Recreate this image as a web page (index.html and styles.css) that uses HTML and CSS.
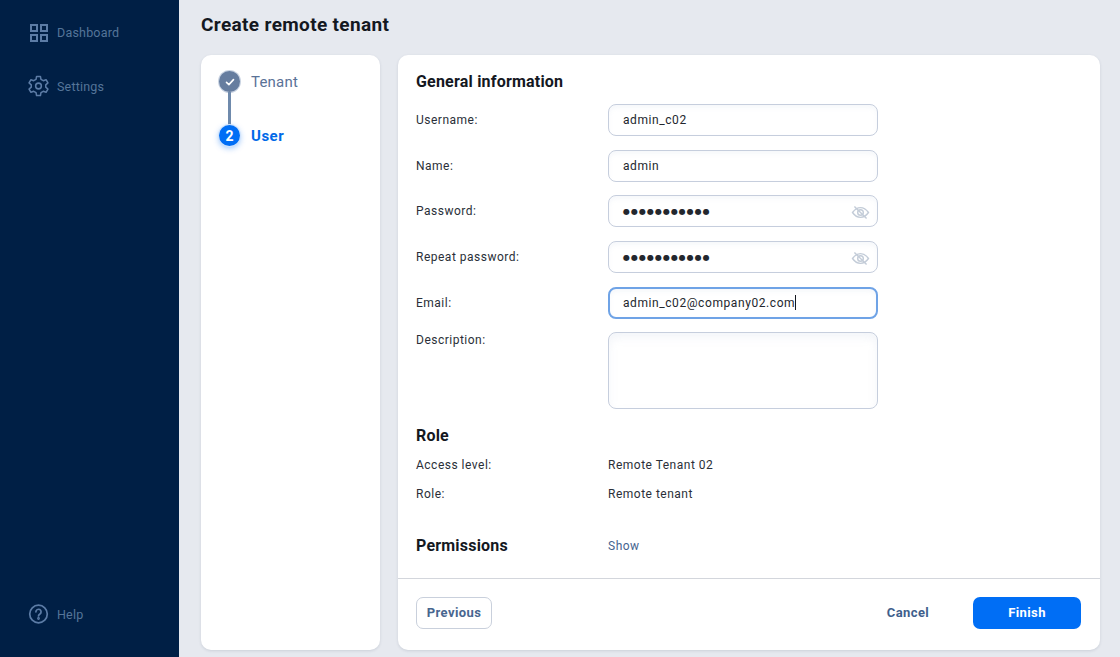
FILE: index.html
```html
<!DOCTYPE html>
<html lang="en">
<head>
    <meta charset="UTF-8">
    <title>Create remote tenant</title>
    <link rel="stylesheet" href="styles.css">
</head>
<body>
    <aside class="sidebar">
        <nav class="nav">
            <a class="nav-item">
                <svg class="nav-icon" viewBox="0 0 21 22" fill="none" stroke="currentColor" stroke-width="2">
                    <rect x="3" y="4" width="6" height="6"/>
                    <rect x="13" y="4" width="6" height="6"/>
                    <rect x="3" y="14" width="6" height="6"/>
                    <rect x="13" y="14" width="6" height="6"/>
                </svg>
                Dashboard
            </a>
            <a class="nav-item">
                <svg class="nav-icon" viewBox="1 1 22 22" fill="none" stroke="currentColor" stroke-width="1.6" stroke-linejoin="round">
                    <circle cx="12" cy="12" r="3"/>
                    <path d="M10 2h4l.6 3 2.4 1.4 2.9-1 2 3.4-2.3 2v2.4l2.3 2-2 3.4-2.9-1-2.4 1.4-.6 3h-4l-.6-3L7 17.6l-2.9 1-2-3.4 2.3-2v-2.4l-2.3-2 2-3.4 2.9 1L9.400 5z"/>
                </svg>
                Settings
            </a>
        </nav>
        <a class="nav-item">
            <svg class="nav-icon" viewBox="0 0 22 22" fill="none" stroke="currentColor" stroke-width="1.8" stroke-linecap="round">
                <circle cx="11" cy="11" r="9.200"/>
                <path d="M8.300 8.700a2.700 2.700 0 1 1 4.200 2.300c-.9.600-1.500 1.100-1.500 2"/>
                <circle cx="11" cy="15.700" r=".6"/>
            </svg>
            Help
        </a>
    </aside>

    <main class="content">
        <h1 class="page-title">Create remote tenant</h1>
        <div class="panels">
            <div class="card steps">
                <div class="step done">
                    <span class="step-dot">
                        <svg viewBox="0 0 12 12" width="12" height="12" fill="none" stroke="#fff" stroke-width="1.600" stroke-linecap="round" stroke-linejoin="round">
                            <path d="M2.500 6.300l2.400 2.300 4.600-5"/>
                        </svg>
                    </span>
                    Tenant
                </div>
                <div class="step active">
                    <span class="step-dot">2</span>
                    User
                </div>
            </div>

            <div class="card wizard">
                <div class="wizard-body">
                    <h2 class="section-title">General information</h2>
                    <div class="form">
                        <div class="row">
                            <label class="row-label">Username:</label>
                            <div class="field">admin_c02</div>
                        </div>
                        <div class="row">
                            <label class="row-label">Name:</label>
                            <div class="field">admin</div>
                        </div>
                        <div class="row">
                            <label class="row-label">Password:</label>
                            <div class="field secret">
                                <span class="dots">●●●●●●●●●●●</span>
                                <svg class="eye" viewBox="0 0 20 16" fill="none" stroke="currentColor" stroke-width="1.500">
                                    <path d="M1.500 8C4 4.500 6.800 2.800 10 2.800s6 1.700 8.500 5.200c-2.500 3.500-5.300 5.200-8.500 5.200S4 11.500 1.500 8z"/>
                                    <circle cx="10" cy="8" r="3"/>
                                    <path d="M3.500 1.500l13 13"/>
                                </svg>
                            </div>
                        </div>
                        <div class="row">
                            <label class="row-label">Repeat password:</label>
                            <div class="field secret">
                                <span class="dots">●●●●●●●●●●●</span>
                                <svg class="eye" viewBox="0 0 20 16" fill="none" stroke="currentColor" stroke-width="1.500">
                                    <path d="M1.500 8C4 4.500 6.800 2.800 10 2.800s6 1.700 8.500 5.200c-2.500 3.500-5.300 5.200-8.500 5.200S4 11.500 1.500 8z"/>
                                    <circle cx="10" cy="8" r="3"/>
                                    <path d="M3.500 1.500l13 13"/>
                                </svg>
                            </div>
                        </div>
                        <div class="row">
                            <label class="row-label">Email:</label>
                            <div class="field focused">admin_c02@company02.com<span class="caret"></span></div>
                        </div>
                        <div class="row row-top">
                            <label class="row-label">Description:</label>
                            <div class="field area"></div>
                        </div>
                    </div>

                    <h2 class="section-title role-title">Role</h2>
                    <div class="info">
                        <div class="info-row"><span class="row-label">Access level:</span><span>Remote Tenant 02</span></div>
                        <div class="info-row"><span class="row-label">Role:</span><span>Remote tenant</span></div>
                    </div>

                    <div class="permissions">
                        <h2 class="section-title row-label">Permissions</h2>
                        <a class="link">Show</a>
                    </div>
                </div>

                <div class="wizard-footer">
                    <button class="btn btn-outline">Previous</button>
                    <div class="footer-right">
                        <button class="btn btn-plain">Cancel</button>
                        <button class="btn btn-primary">Finish</button>
                    </div>
                </div>
            </div>
        </div>
    </main>
</body>
</html>
```

FILE: styles.css
```css
* {
    box-sizing: border-box;
}
html, body {
    height: 100%;
}
body {
    margin: 0;
    display: flex;
    height: 657px;
    overflow: hidden;
    font-family: Roboto, "Liberation Sans", Arial, sans-serif;
    font-size: 12px;
    letter-spacing: 0.5px;
    color: #2a2f38;
    background-color: #e6e9ef;
}

/* sidebar */
.sidebar {
    width: 179px;
    flex: none;
    display: flex;
    flex-direction: column;
    justify-content: space-between;
    padding: 21px 0 32px 28px;
    background-color: #001f45;
}
.nav {
    display: flex;
    flex-direction: column;
    gap: 32px;
}
.nav-item {
    display: flex;
    align-items: center;
    gap: 8px;
    height: 22px;
    font-size: 12.5px;
    letter-spacing: 0.2px;
    color: #557599;
}
.nav-icon {
    width: 21px;
    height: 22px;
    flex: none;
    color: #5c7ca6;
}

/* content */
.content {
    flex: 1;
    padding: 0 20px 7px 22px;
    display: flex;
    flex-direction: column;
}
.page-title {
    margin: 0;
    height: 55px;
    padding-top: 14px;
    font-size: 19px;
    line-height: 22px;
    font-weight: 700;
    letter-spacing: 0.35px;
    color: #14181f;
}
.panels {
    flex: 1;
    display: flex;
    gap: 18px;
    min-height: 0;
}
.card {
    background: #fff;
    border-radius: 10px;
    box-shadow: 0 1px 3px rgba(40, 55, 85, 0.14);
}

/* stepper */
.steps {
    width: 179px;
    flex: none;
    padding: 16px 18px;
    display: flex;
    flex-direction: column;
    gap: 33px;
}
.step {
    position: relative;
    display: flex;
    align-items: center;
    gap: 11px;
    height: 21px;
    font-size: 15px;
    letter-spacing: 0.2px;
    color: #5a7297;
}
.step-dot {
    width: 21px;
    height: 21px;
    flex: none;
    display: flex;
    align-items: center;
    justify-content: center;
    border-radius: 50%;
    background: #667d9f;
    box-shadow: 0 0 0 1px #c9d3e2;
    color: #fff;
    font-size: 14px;
    font-weight: 700;
    letter-spacing: 0;
}
.step.done::after {
    content: "";
    position: absolute;
    left: 9px;
    top: 21px;
    width: 3px;
    height: 33px;
    background: #6f8aac;
}
.step.active {
    color: #0069e8;
    font-weight: 700;
    letter-spacing: 0.5px;
}
.step.active .step-dot {
    background: #006ef5;
    box-shadow: 0 0 0 1px #cfe3fd, 0 2px 6px rgba(0, 110, 245, 0.45);
}

/* wizard */
.wizard {
    flex: 1;
    display: flex;
    flex-direction: column;
}
.wizard-body {
    flex: 1;
    padding: 17px 18px 0;
}
.section-title {
    margin: 0;
    font-size: 16px;
    line-height: 19px;
    font-weight: 700;
    letter-spacing: 0.2px;
    color: #14181f;
}
.form {
    margin-top: 13px;
    display: flex;
    flex-direction: column;
    gap: 13.700px;
}
.row {
    display: flex;
    align-items: center;
}
.row-top {
    align-items: flex-start;
}
.row-top .row-label {
    padding-top: 1px;
}
.row-label {
    width: 192px;
    flex: none;
}
.field {
    position: relative;
    width: 270px;
    height: 32px;
    padding: 0 14px;
    display: flex;
    align-items: center;
    background: #fff;
    border: 1px solid #c6cedd;
    border-radius: 8px;
    box-shadow: inset 0 3px 4px rgba(200, 210, 228, 0.16);
    letter-spacing: 0.58px;
    color: #23272e;
}
.field.focused {
    border: 2px solid #6fa3e6;
    padding: 0 13px;
}
.field.area {
    height: 77px;
    box-shadow: inset 0 5px 8px rgba(200, 210, 228, 0.22);
}
.caret {
    width: 1px;
    height: 15px;
    background: #14181f;
}
.dots {
    font-size: 8px;
    letter-spacing: 1px;
    color: #23272e;
    font-family: "DejaVu Sans", sans-serif;
}
.eye {
    position: absolute;
    right: 7px;
    top: 9px;
    width: 19px;
    height: 15px;
    color: #c3ccd8;
}
.role-title {
    margin-top: 17px;
}
.info {
    margin-top: 13px;
    display: flex;
    flex-direction: column;
    gap: 14px;
}
.info-row {
    display: flex;
    line-height: 15px;
}
.permissions {
    display: flex;
    align-items: center;
    margin-top: 34px;
}
.link {
    color: #46648f;
}

/* footer */
.wizard-footer {
    height: 72px;
    flex: none;
    display: flex;
    align-items: center;
    justify-content: space-between;
    padding: 0 19px 4px 18px;
    border-top: 1px solid #d3d6dc;
}
.footer-right {
    display: flex;
    align-items: center;
    gap: 21px;
}
.btn {
    height: 32px;
    border-radius: 7px;
    font-family: inherit;
    font-size: 13px;
    font-weight: 700;
    letter-spacing: 0.4px;
    border: none;
    background: none;
    padding: 0;
}
.btn-outline {
    width: 76px;
    background: #fff;
    border: 1px solid #c9d0dc;
    color: #48668f;
}
.btn-plain {
    width: 88px;
    color: #3f5f8c;
}
.btn-primary {
    width: 108px;
    background: #006ef5;
    color: #fff;
}
```
